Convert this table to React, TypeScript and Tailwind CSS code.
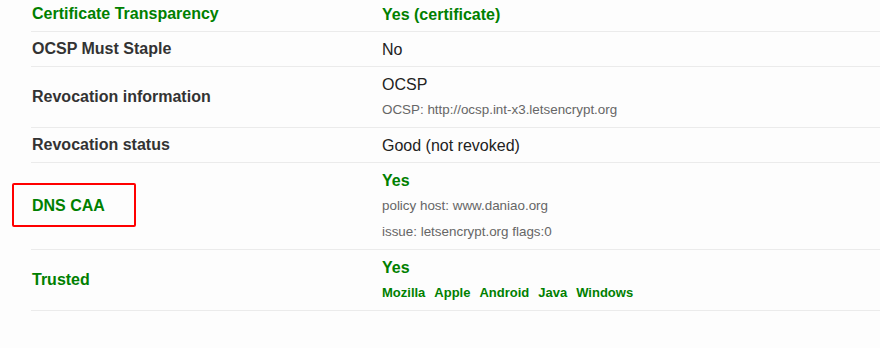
import React from "react";

type Row = {
  label: string;
  good?: boolean;
  value: React.ReactNode;
  notes?: string[];
  marked?: boolean;
};

const rows: Row[] = [
  {
    label: "Certificate Transparency",
    good: true,
    value: <span className="font-bold text-[#008000]">Yes (certificate)</span>,
  },
  { label: "OCSP Must Staple", value: "No" },
  {
    label: "Revocation information",
    value: "OCSP",
    notes: ["OCSP: http://ocsp.int-x3.letsencrypt.org"],
  },
  { label: "Revocation status", value: "Good (not revoked)" },
  {
    label: "DNS CAA",
    good: true,
    marked: true,
    value: <span className="font-bold text-[#008000]">Yes</span>,
    notes: ["policy host: www.daniao.org", "issue: letsencrypt.org flags:0"],
  },
];

const stores = ["Mozilla", "Apple", "Android", "Java", "Windows"];

function InfoRow({ row }: { row: Row }) {
  return (
    <div className="relative flex border-b border-[#ebebeb]">
      <div
        className={`w-[351px] shrink-0 flex items-center pl-[1px] font-bold ${
          row.good ? "text-[#008000]" : "text-[#333]"
        }`}
      >
        {row.label}
      </div>
      <div className="pt-2 pb-[6px]">
        <div className="leading-5 text-[#222]">{row.value}</div>
        {row.notes?.map((n) => (
          <div key={n} className="mt-1 text-[13.4px] leading-[22px] text-[#666]">
            {n}
          </div>
        ))}
      </div>
      {row.marked && (
        <div className="absolute left-[-19px] top-[20px] w-[124px] h-[44px] border-2 border-[#f00] rounded-[2px]" />
      )}
    </div>
  );
}

export default function App() {
  return (
    <div
      className="w-[880px] h-[348px] overflow-hidden bg-[#fdfdfd] text-[16px]"
      style={{ fontFamily: '"Liberation Sans", Arial, sans-serif' }}
    >
      <div className="ml-[31px] -mt-[3px]">
        {rows.map((r) => (
          <InfoRow key={r.label} row={r} />
        ))}
        <div className="flex border-b border-[#ebebeb]">
          <div className="w-[351px] shrink-0 flex items-center pl-[1px] font-bold text-[#008000]">
            Trusted
          </div>
          <div className="pt-2 pb-[6px]">
            <div className="leading-5 font-bold text-[#008000]">Yes</div>
            <div className="mt-1 flex gap-[9px] text-[13px] leading-[22px] font-bold text-[#008000]">
              {stores.map((s) => (
                <span key={s}>{s}</span>
              ))}
            </div>
          </div>
        </div>
      </div>
    </div>
  );
}
